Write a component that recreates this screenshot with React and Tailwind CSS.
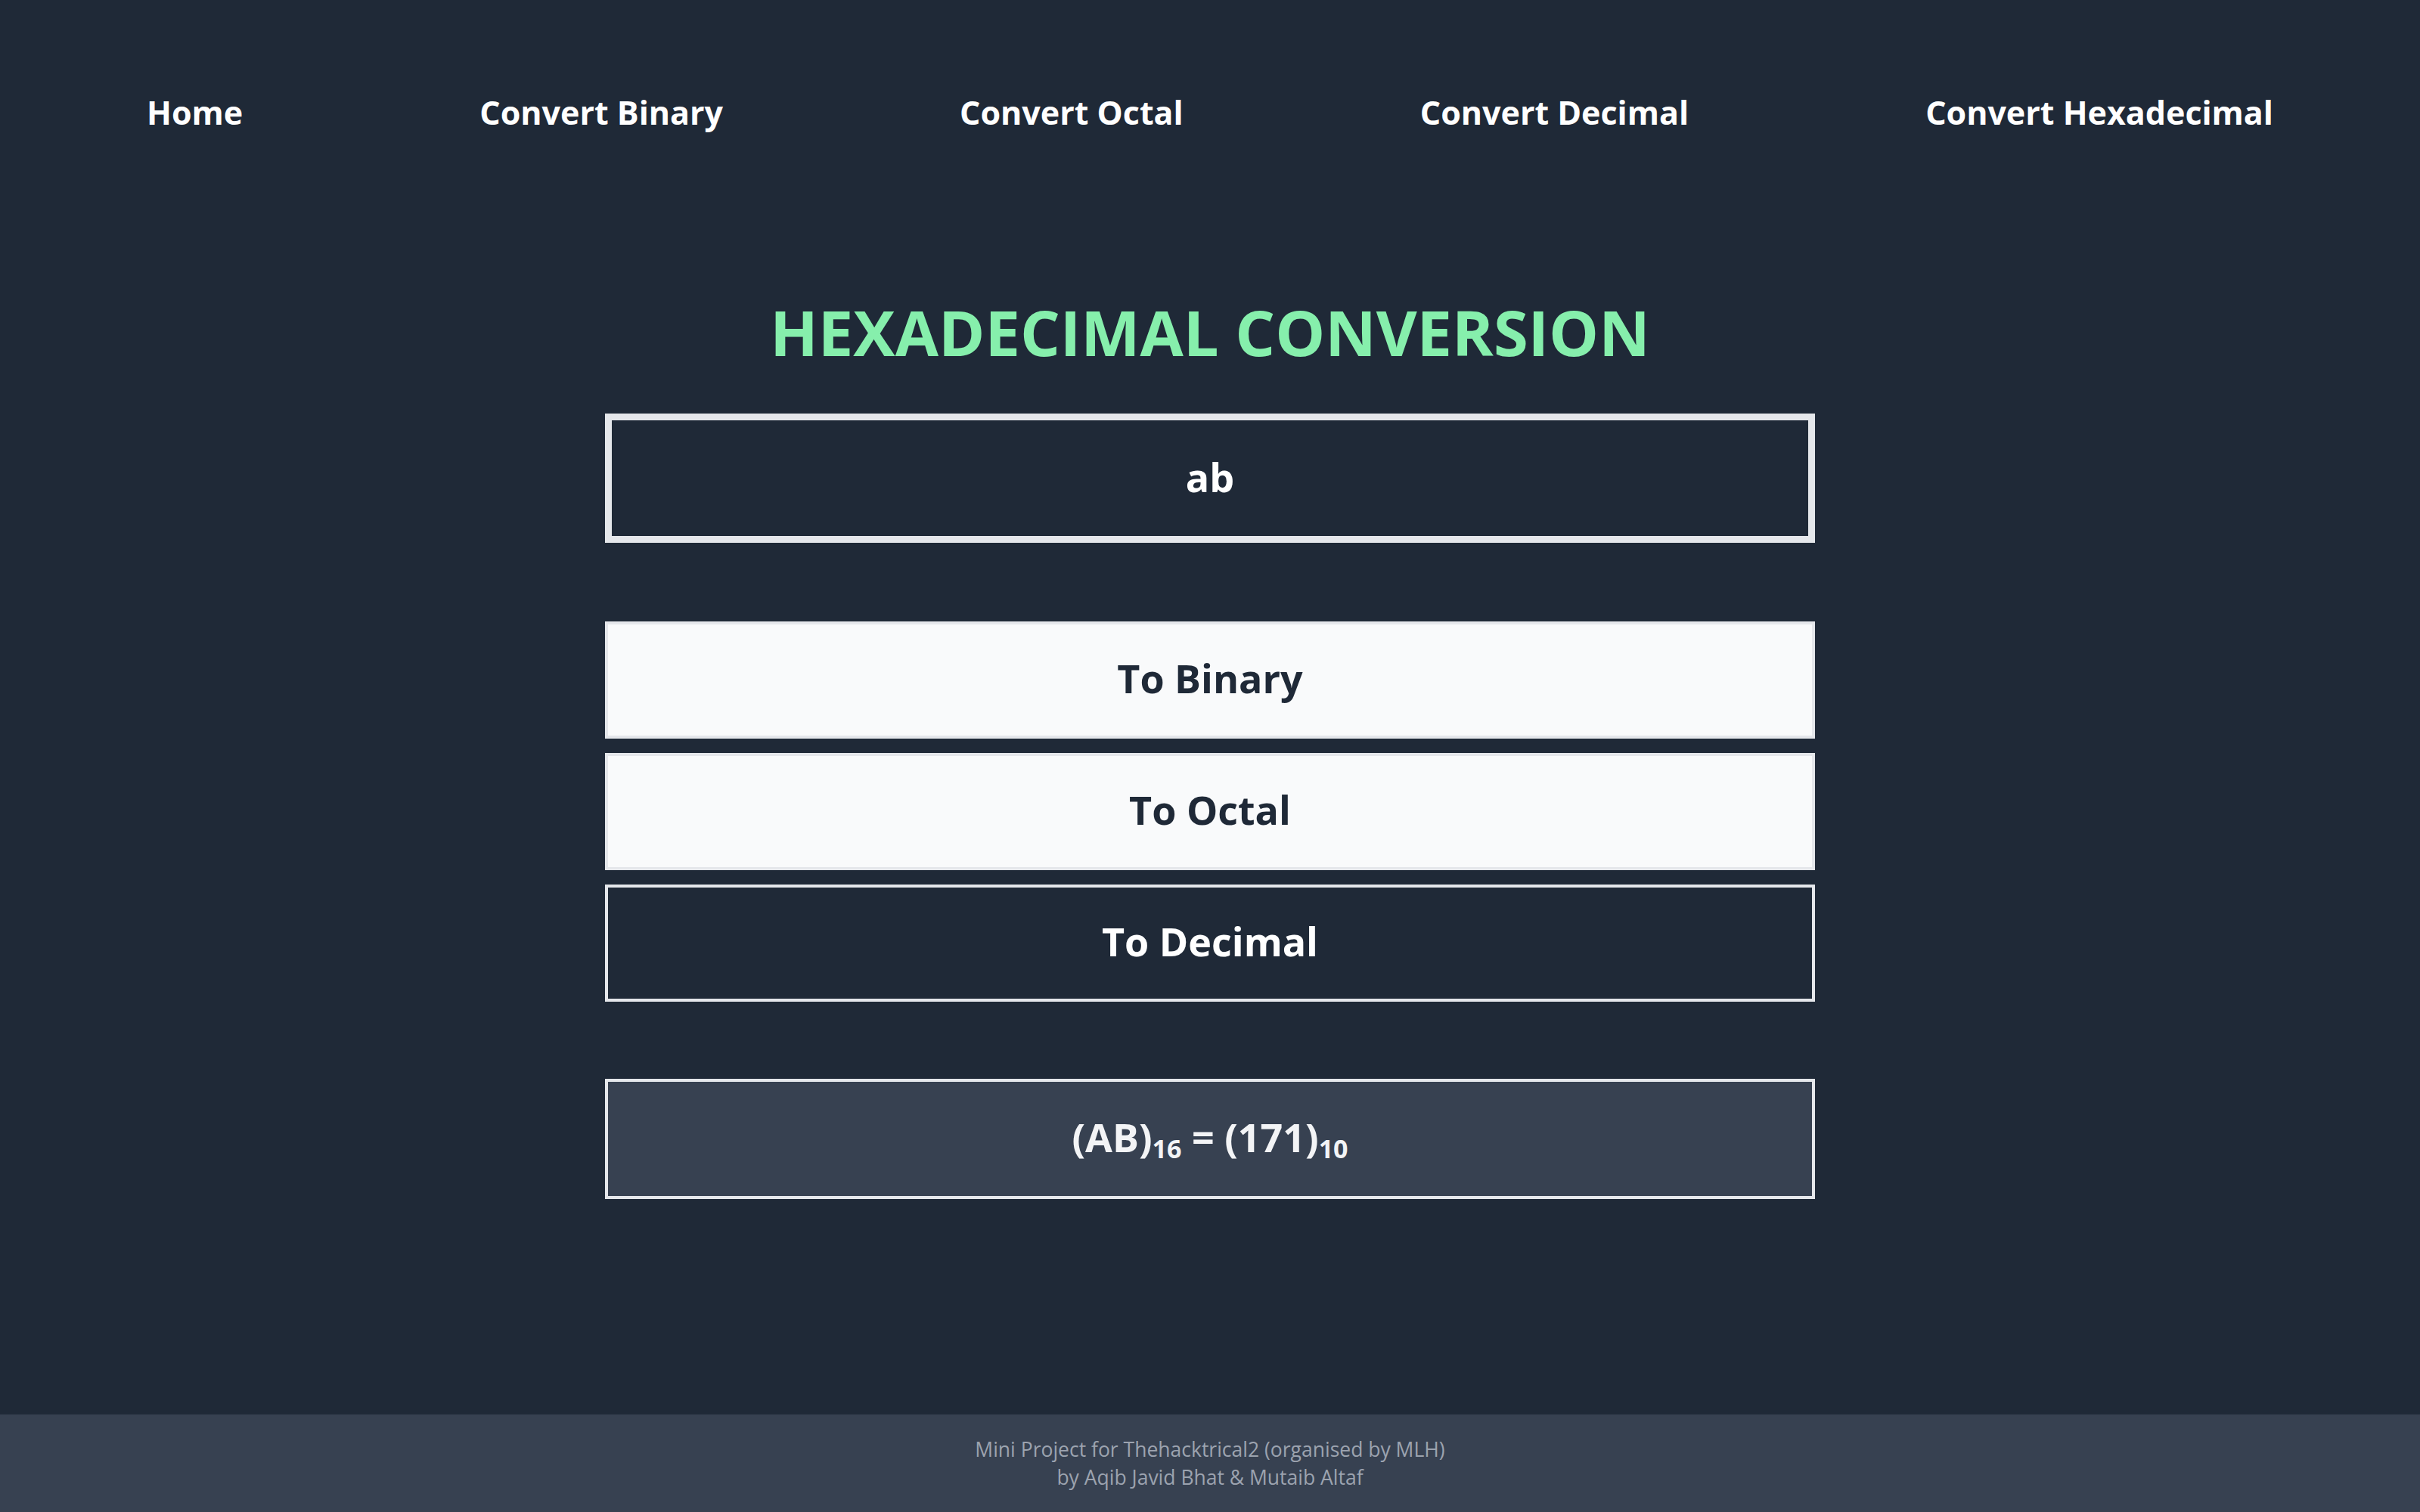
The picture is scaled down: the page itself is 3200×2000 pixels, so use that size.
import { useState } from "react";

const links = ["Home", "Convert Binary", "Convert Octal", "Convert Decimal", "Convert Hexadecimal"];

const App = () => {
  const [value, setValue] = useState("ab");

  return (
    <div className="h-screen flex flex-col bg-[#1f2937] font-['Open_Sans',sans-serif]">
      {/* Nav */}
      <nav className="flex justify-between px-[194px] pt-[121px]">
        {links.map((link) => (
          <a key={link} href="#" className="text-[43px] leading-[56px] font-bold text-white">
            {link}
          </a>
        ))}
      </nav>

      {/* Converter */}
      <main className="flex-1 flex flex-col items-center">
        <h1 className="mt-[212px] text-[83px] leading-[100px] font-bold text-[#86efac]">
          HEXADECIMAL CONVERSION
        </h1>

        <input
          type="text"
          value={value}
          onChange={(e) => setValue(e.target.value)}
          className="mt-[58px] w-[1600px] h-[171px] pb-[4px] border-[9px] border-[#e5e7eb] bg-[#1f2937] text-center text-[52px] font-bold text-white focus:outline-none"
        />

        <div className="mt-[104px] w-[1600px] flex flex-col gap-[19px]">
          <button className="h-[155px] pb-[6px] border-4 border-[#e5e7eb] bg-[#f9fafb] text-[52px] font-bold text-[#1f2937]">
            To Binary
          </button>
          <button className="h-[155px] pb-[6px] border-4 border-[#e5e7eb] bg-[#f9fafb] text-[52px] font-bold text-[#1f2937]">
            To Octal
          </button>
          <button className="h-[155px] pb-[6px] border-4 border-[#e5e7eb] bg-[#1f2937] text-[52px] font-bold text-white">
            To Decimal
          </button>
        </div>

        <div className="mt-[102px] w-[1600px] h-[159px] pb-[6px] flex items-center justify-center border-4 border-[#e5e7eb] bg-[#374151] text-[52px] font-bold text-[#f3f4f6]">
          <span>
            (AB)<sub className="text-[34px]">16</sub> = (171)<sub className="text-[34px]">10</sub>
          </span>
        </div>
      </main>

      {/* Footer */}
      <footer className="h-[129px] flex flex-col items-center justify-center bg-[#374151] text-[26.5px] leading-[37px] text-[#9ca3af]">
        <p>Mini Project for Thehacktrical2 (organised by MLH)</p>
        <p>by Aqib Javid Bhat &amp; Mutaib Altaf</p>
      </footer>
    </div>
  );
};

export default App;
